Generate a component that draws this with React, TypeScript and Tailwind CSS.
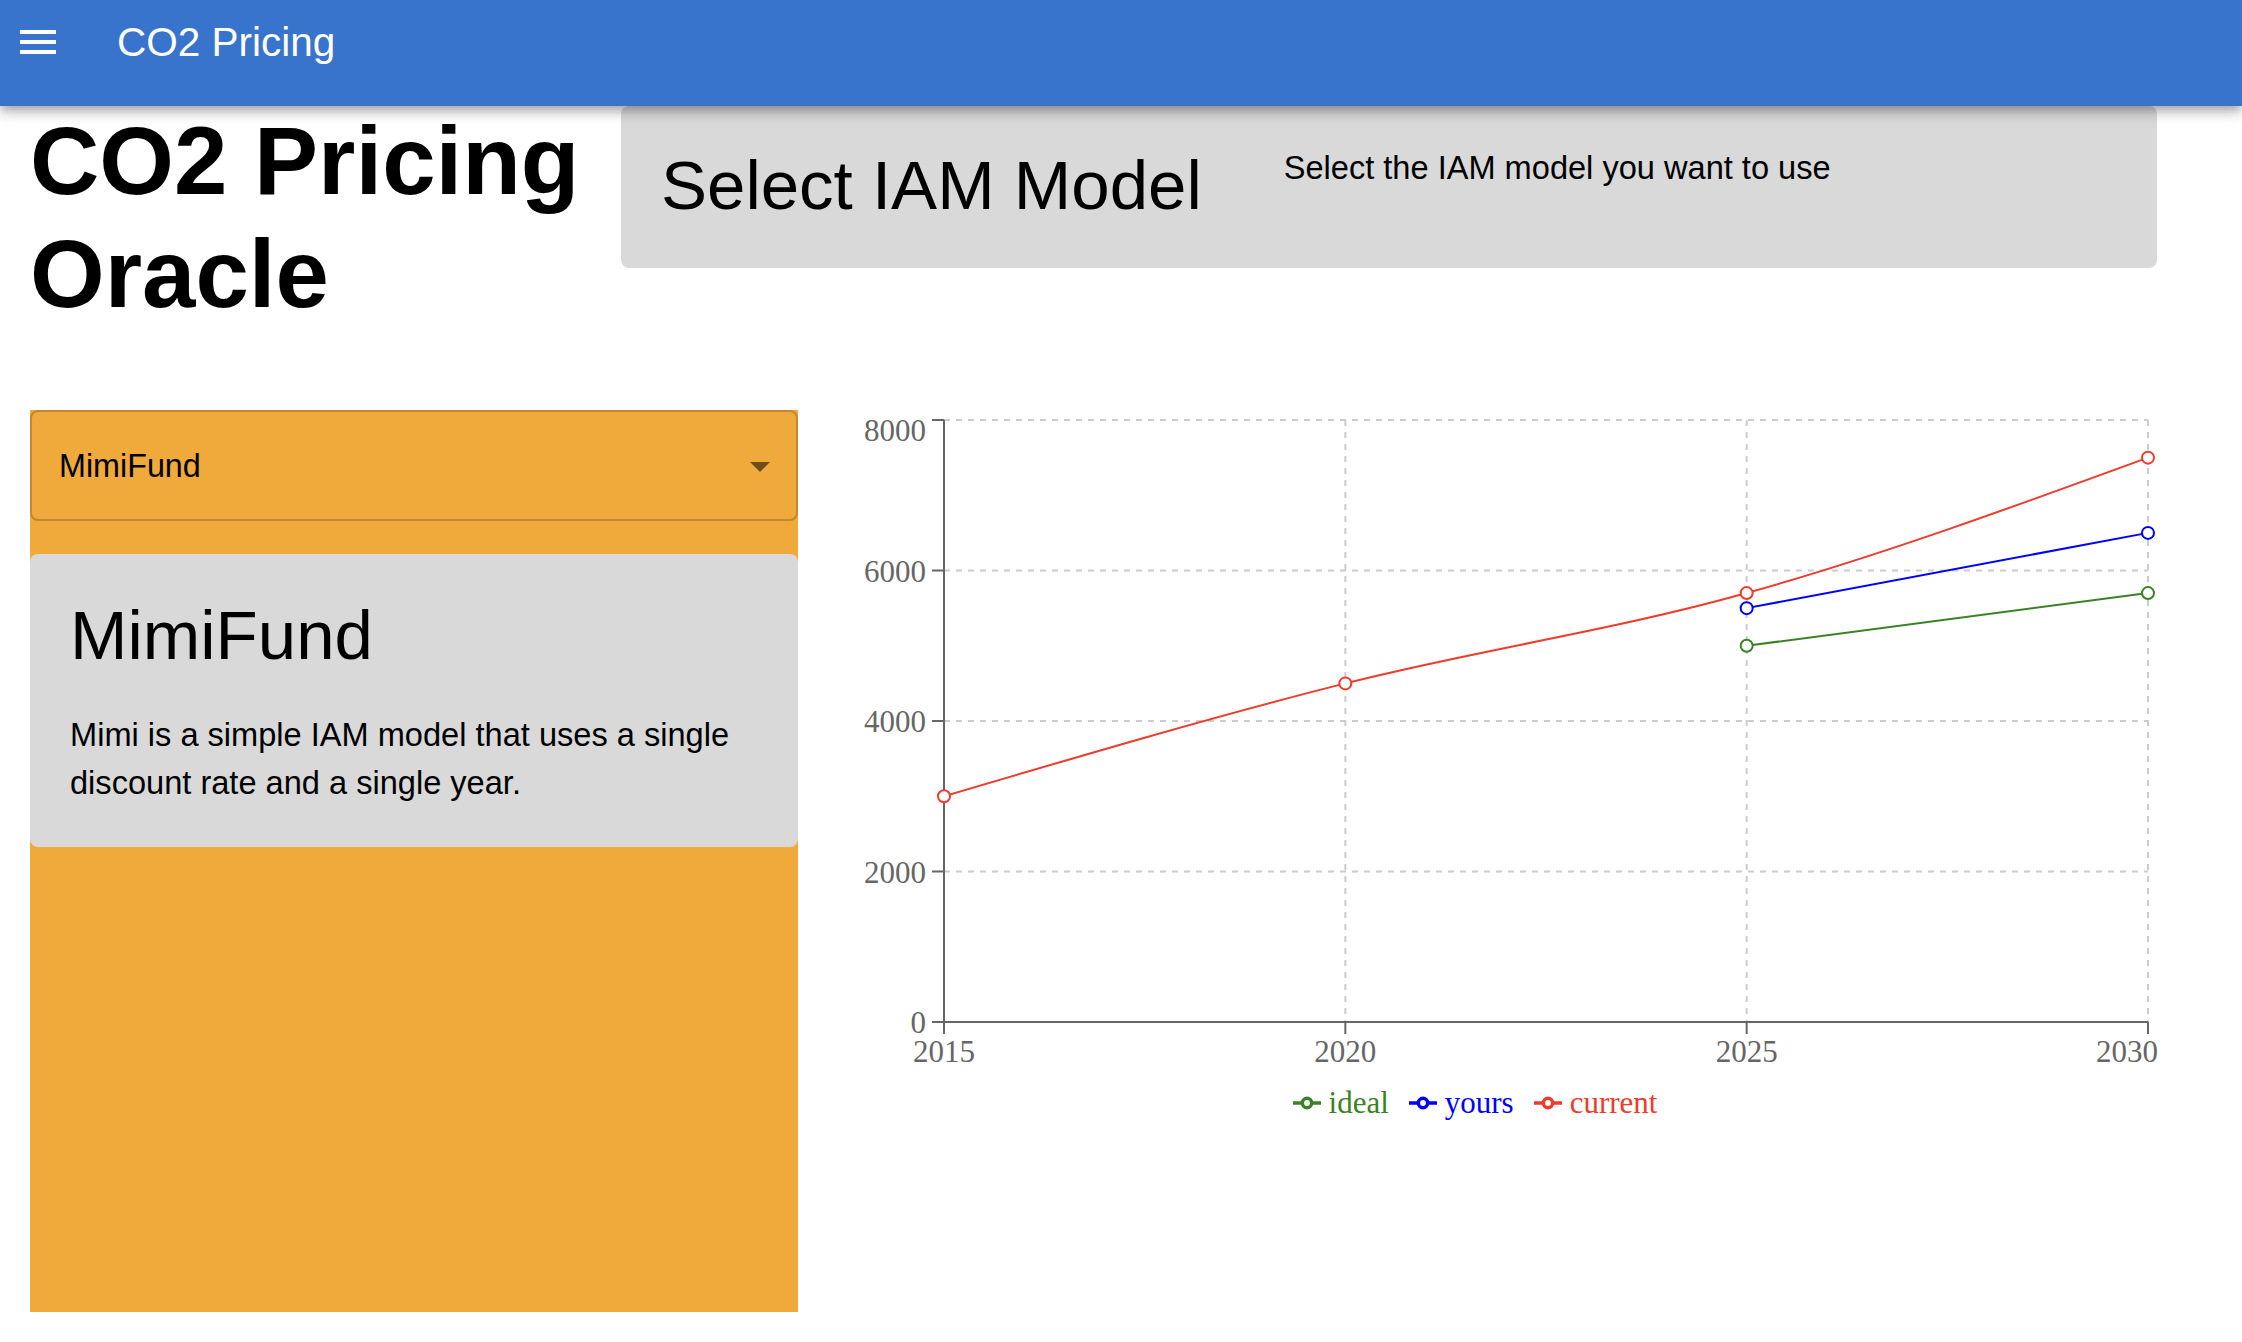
type Pt = [number, number];

const PLOT = { left: 132, right: 1336, top: 10, bottom: 612 };
const YEARS = [2015, 2020, 2025, 2030];
const Y_TICKS = [0, 2000, 4000, 6000, 8000];

const SERIES = [
  { name: 'ideal', color: '#3B8226', data: [[2025, 5000], [2030, 5700]] as Pt[] },
  { name: 'yours', color: '#0000FF', data: [[2025, 5500], [2030, 6500]] as Pt[] },
  { name: 'current', color: '#EE3B2B', data: [[2015, 3000], [2020, 4500], [2025, 5700], [2030, 7500]] as Pt[] },
];

const sx = (year: number) => PLOT.left + ((year - 2015) / 15) * (PLOT.right - PLOT.left);
const sy = (v: number) => PLOT.bottom - (v / 8000) * (PLOT.bottom - PLOT.top);

// same maths as d3 curveMonotoneX
function monotonePath(pts: Pt[]): string {
  const n = pts.length;
  if (n < 2) return '';
  if (n === 2) return `M${pts[0][0]},${pts[0][1]}L${pts[1][0]},${pts[1][1]}`;
  const sign = (v: number) => (v < 0 ? -1 : 1);
  const t: number[] = new Array(n).fill(0);
  for (let i = 1; i < n - 1; i++) {
    const [x0, y0] = pts[i - 1];
    const [x1, y1] = pts[i];
    const [x2, y2] = pts[i + 1];
    const h0 = x1 - x0;
    const h1 = x2 - x1;
    const s0 = (y1 - y0) / h0;
    const s1 = (y2 - y1) / h1;
    const p = (s0 * h1 + s1 * h0) / (h0 + h1);
    t[i] = (sign(s0) + sign(s1)) * Math.min(Math.abs(s0), Math.abs(s1), 0.5 * Math.abs(p)) || 0;
  }
  const slope2 = (a: number, b: number, tt: number) => {
    const h = pts[b][0] - pts[a][0];
    return h ? (3 * (pts[b][1] - pts[a][1]) / h - tt) / 2 : tt;
  };
  t[0] = slope2(0, 1, t[1]);
  t[n - 1] = slope2(n - 2, n - 1, t[n - 2]);
  let d = `M${pts[0][0]},${pts[0][1]}`;
  for (let i = 0; i < n - 1; i++) {
    const [x0, y0] = pts[i];
    const [x1, y1] = pts[i + 1];
    const dx = (x1 - x0) / 3;
    d += `C${x0 + dx},${y0 + dx * t[i]},${x1 - dx},${y1 - dx * t[i + 1]},${x1},${y1}`;
  }
  return d;
}

function MenuIcon() {
  return (
    <svg width="48" height="48" viewBox="0 0 24 24" fill="white">
      <path d="M3 18h18v-2H3v2zm0-5h18v-2H3v2zm0-7v2h18V6H3z" />
    </svg>
  );
}

function LegendIcon({ color }: { color: string }) {
  return (
    <svg width="28" height="28" viewBox="0 0 32 32" className="mr-2 shrink-0">
      <path
        strokeWidth={4}
        fill="none"
        stroke={color}
        d="M0,16h10.667A5.333,5.333,0,1,1,21.333,16H32M21.333,16A5.333,5.333,0,1,1,10.667,16"
      />
    </svg>
  );
}

function PriceChart() {
  return (
    <div className="w-[1346px] shrink-0">
      <svg width="1346" height="675" className="block font-['Liberation_Serif',serif]">
        {/* grid */}
        <g stroke="#ccc" strokeWidth={2} strokeDasharray="6 6" fill="none">
          {Y_TICKS.map((v) => (
            <line key={v} x1={PLOT.left} x2={PLOT.right} y1={sy(v)} y2={sy(v)} />
          ))}
          {YEARS.map((yr) => (
            <line key={yr} x1={sx(yr)} x2={sx(yr)} y1={PLOT.top} y2={PLOT.bottom} />
          ))}
        </g>

        {/* axes */}
        <g stroke="#666" strokeWidth={2}>
          <line x1={PLOT.left} x2={PLOT.left} y1={PLOT.top} y2={PLOT.bottom} />
          <line x1={PLOT.left} x2={PLOT.right} y1={PLOT.bottom} y2={PLOT.bottom} />
          {Y_TICKS.map((v) => (
            <line key={v} x1={PLOT.left - 12} x2={PLOT.left} y1={sy(v)} y2={sy(v)} />
          ))}
          {YEARS.map((yr) => (
            <line key={yr} x1={sx(yr)} x2={sx(yr)} y1={PLOT.bottom} y2={PLOT.bottom + 12} />
          ))}
        </g>

        <g fill="#666" fontSize={31}>
          {Y_TICKS.map((v) => (
            <text
              key={v}
              x={PLOT.left - 18}
              y={v === 8000 ? sy(v) + 9.5 : sy(v)}
              dy="0.355em"
              textAnchor="end"
            >
              {v}
            </text>
          ))}
          {YEARS.map((yr, i) => (
            <text
              key={yr}
              x={i === YEARS.length - 1 ? 1346 : sx(yr)}
              y={651.5}
              textAnchor={i === YEARS.length - 1 ? 'end' : 'middle'}
            >
              {yr}
            </text>
          ))}
        </g>

        {/* lines */}
        {SERIES.map((s) => {
          const pts = s.data.map(([yr, v]) => [sx(yr), sy(v)] as Pt);
          return (
            <g key={s.name}>
              <path d={monotonePath(pts)} fill="none" stroke={s.color} strokeWidth={2} />
              {pts.map(([x, y]) => (
                <circle key={x} cx={x} cy={y} r={6} fill="#fff" stroke={s.color} strokeWidth={2} />
              ))}
            </g>
          );
        })}
      </svg>

      {/* legend */}
      <div className="flex h-[36px] items-center justify-center font-['Liberation_Serif',serif] text-[31px] leading-[36px]">
        {SERIES.map((s) => (
          <div key={s.name} className="mr-5 flex items-center" style={{ color: s.color }}>
            <LegendIcon color={s.color} />
            <span>{s.name}</span>
          </div>
        ))}
      </div>
    </div>
  );
}

export default function App() {
  return (
    <div className="min-h-screen bg-white font-['Liberation_Sans',Arial,sans-serif] text-black">
      <header className="relative z-10 h-[106px] bg-[#3874CB] pl-[14px] pt-[18px] shadow-[0_4px_8px_-2px_rgba(0,0,0,0.2),0_8px_10px_0_rgba(0,0,0,0.14),0_2px_20px_0_rgba(0,0,0,0.12)]">
        <div className="flex h-12 items-center">
          <MenuIcon />
          <span className="ml-[55px] text-[40.5px] leading-[48px] text-white">CO2 Pricing</span>
        </div>
      </header>

      <main className="pl-[30px] pr-[85px]">
        <div className="flex items-start">
          <h1 className="-mt-[2px] w-[591px] shrink-0 text-[96px] font-bold leading-[113px]">
            CO2 Pricing Oracle
          </h1>
          <div className="flex flex-1 items-start gap-[82px] rounded-lg bg-[#D9D9D9] pl-10 pr-10 pt-[38px] pb-[41px]">
            <h2 className="text-[69px] leading-[83px]">Select IAM Model</h2>
            <p className="text-[32.6px] leading-[48px]">Select the IAM model you want to use</p>
          </div>
        </div>

        <div className="mt-[80px] flex items-start gap-[14px]">
          <div className="h-[902px] w-[768px] shrink-0 bg-[#F0A93B]">
            <div className="relative flex h-[111px] items-center rounded-lg border-2 border-[#C4872F] pl-[27px]">
              <span className="text-[32.3px] leading-[48px]">MimiFund</span>
              <svg
                width="48"
                height="48"
                viewBox="0 0 24 24"
                className="absolute right-[12px] top-1/2 -translate-y-1/2"
                fill="rgba(0,0,0,0.54)"
              >
                <path d="M7 10l5 5 5-5z" />
              </svg>
            </div>

            <div className="mt-[33px] rounded-lg bg-[#D9D9D9] p-10">
              <h3 className="text-[69px] leading-[83px]">MimiFund</h3>
              <p className="mt-[34px] text-[32.6px] leading-[48px]">
                Mimi is a simple IAM model that uses a single discount rate and a single year.
              </p>
            </div>
          </div>

          <PriceChart />
        </div>
      </main>
    </div>
  );
}
